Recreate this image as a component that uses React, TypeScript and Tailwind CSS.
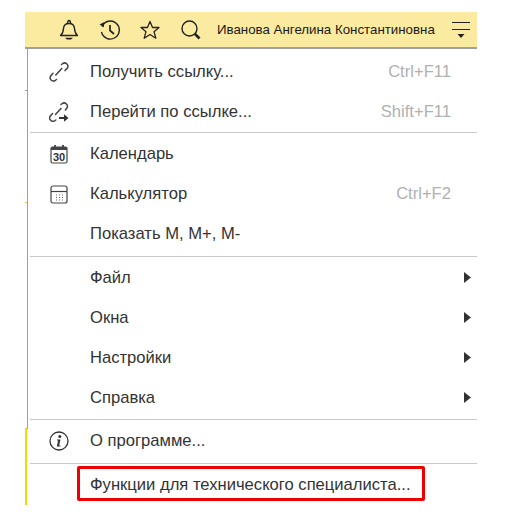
const Bell = () => (
  <svg width="20" height="22" viewBox="0 0 20 22" fill="none" stroke="#222" strokeWidth="1.4">
    <path d="M1.5 16.500c2.500-2 2.800-4 3-7 .2-3 2-5 5.500-5s5.300 2 5.500 5c.2 3 .5 5 3 7z" strokeLinejoin="round" />
    <path d="M8.500 4.200c0-1 .5-2.700 1.500-2.700s1.500 1.700 1.500 2.700" />
    <path d="M6 18.800h8l-2 1.700h-4z" fill="#222" stroke="none" />
  </svg>
);
const History = () => (
  <svg width="21" height="20" viewBox="0 0 21 20" fill="none" stroke="#222" strokeWidth="1.4">
    <path d="M3 6.500A9 9 0 1 1 2.500 12" />
    <path d="M.5 4.500l4.500-2.200v5z" fill="#222" stroke="none" />
    <path d="M11 5v5.500l4 3.500" strokeWidth="1.700" />
  </svg>
);
const Star = () => (
  <svg width="20" height="20" viewBox="0 0 20 20" fill="none" stroke="#222" strokeWidth="1.3">
    <path d="M10 1.500l2.500 6h6.500l-5 4.200 1.800 6.500-5.800-3.700-5.800 3.700 1.800-6.500-5-4.200h6.500z" strokeLinejoin="round" />
  </svg>
);
const Search = () => (
  <svg width="20" height="20" viewBox="0 0 20 20" fill="none" stroke="#222" strokeWidth="1.4">
    <circle cx="8.500" cy="8.500" r="7.500" />
    <path d="M14 14l4.500 4.500" strokeWidth="2.600" />
  </svg>
);
const Burger = () => (
  <svg width="20" height="18" viewBox="0 0 20 18" fill="none">
    <path d="M1 1.500h18M1 8.500h18" stroke="#222" strokeWidth="1.200" />
    <path d="M6.500 13h7l-3.500 4z" fill="#222" />
  </svg>
);
const Link = () => (
  <svg width="20" height="20" viewBox="0 0 20 20" fill="none" stroke="#444" strokeWidth="1.500" strokeLinecap="round">
    <path d="M7.500 17.500l-1.300 1a3.300 3.300 0 0 1-4.500-4.600l2.300-2.600" />
    <path d="M6.800 13l6-6.500" />
    <path d="M12.500 2.500l1.300-1a3.300 3.300 0 0 1 4.600 4.500l-2.300 2.600" />
  </svg>
);
const GoLink = () => (
  <svg width="20" height="20" viewBox="0 0 20 20" fill="none" stroke="#444" strokeWidth="1.500" strokeLinecap="round">
    <path d="M6.800 18l-1.100.8a3.300 3.300 0 0 1-4.500-4.600l2.300-2.600" />
    <path d="M6.500 12.500l5.500-6" />
    <path d="M12 2.500l1.300-1a3.300 3.300 0 0 1 4.600 4.500l-1.500 2" />
    <path d="M10 15h5v-2.800l4.500 3.800-4.500 3.800v-2.800h-5z" fill="#333" stroke="none" />
  </svg>
);
const Calendar = () => (
  <svg width="18" height="20" viewBox="0 0 18 20" fill="none">
    <rect x="1" y="3" width="16" height="16" rx="1.500" fill="#fff" stroke="#444" strokeWidth="1.200" />
    <path d="M1 3h16v3H1z" fill="#444" />
    <path d="M5 1v3M13 1v3" stroke="#444" strokeWidth="1.800" />
    <text x="9" y="16.800" textAnchor="middle" fontSize="11" fontWeight="700" fontFamily="'Liberation Sans', sans-serif" fill="#333">30</text>
  </svg>
);
const Calc = () => (
  <svg width="18" height="19" viewBox="0 0 18 19" fill="none">
    <rect x="1" y="1" width="16" height="17" rx="2" stroke="#444" strokeWidth="1.200" />
    <path d="M1 6.500h16" stroke="#444" strokeWidth="1.200" />
    <path d="M6 10h1M9 10h1M12 10h1M6 12.500h1M9 12.500h1M12 12.500h1M6 15h1M9 15h1M12 15h1" stroke="#666" strokeWidth="1.100" />
  </svg>
);
const Info = () => (
  <svg width="20" height="20" viewBox="0 0 20 20" fill="none">
    <circle cx="10" cy="10" r="9" stroke="#333" strokeWidth="1.300" />
    <circle cx="10.800" cy="5.500" r="1.500" fill="#333" />
    <path d="M8 8.500h3.500l-1.400 6h1.400v1H7.800l1.300-6H8z" fill="#333" />
  </svg>
);

function Item({ icon, label, hint, arrow }: { icon?: React.ReactNode; label: string; hint?: string; arrow?: boolean }) {
  return (
    <div className="flex h-10 items-center text-[16.600px] text-[#333]">
      <div className="flex w-[60px] justify-center pr-[3px]">{icon}</div>
      <span className={arrow ? "flex-1 pt-[3px]" : "flex-1 pt-[1px]"}>{label}</span>
      {hint && <span className="pt-[1px] pr-[26px] text-[#b0b0b0]">{hint}</span>}
      {arrow && (
        <svg className="mr-[6px]" width="7" height="11" viewBox="0 0 7 11">
          <path d="M0 0l7 5.500L0 11z" fill="#333" />
        </svg>
      )}
    </div>
  );
}

const Divider = () => <div className="h-px bg-[#c8c8c8]" />;

export default function App() {
  return (
    <div
      className="h-[514px] w-[514px] overflow-hidden bg-white pt-3 pl-[25px]"
      style={{ fontFamily: "'Liberation Sans', Arial, sans-serif" }}
    >
      <div className="w-[452px]">
        <div className="flex h-[37px] items-center border-b-2 border-[#a0a0a0] bg-[#fbeba0]">
          <div className="ml-[33px] flex w-[22px] justify-center"><Bell /></div>
          <div className="ml-[18px] flex w-[22px] justify-center"><History /></div>
          <div className="ml-[19px] flex w-[22px] justify-center"><Star /></div>
          <div className="ml-[19px] flex w-[22px] justify-center"><Search /></div>
          <span className="ml-[15px] text-[13.300px] whitespace-nowrap text-[#1a1a1a]">Иванова Ангелина Константиновна</span>
          <div className="ml-[16px]"><Burger /></div>
        </div>
        <div className="relative flex">
          <div className="flex h-[380px] w-[3px] shrink-0 justify-end">
            <div className="w-px bg-[#a0a0a0]" />
          </div>
          <div className="min-w-0 flex-1 pt-[3px] pl-[2px]">
            <Item icon={<Link />} label="Получить ссылку..." hint="Ctrl+F11" />
            <Item icon={<GoLink />} label="Перейти по ссылке..." hint="Shift+F11" />
            <Divider />
            <div className="pt-[1px]"><Item icon={<Calendar />} label="Календарь" /></div>
            <Item icon={<Calc />} label="Калькулятор" hint="Ctrl+F2" />
            <Item label="Показать М, М+, М-" />
            <div className="mt-[2px]"><Divider /></div>
            <Item label="Файл" arrow />
            <Item label="Окна" arrow />
            <Item label="Настройки" arrow />
            <Item label="Справка" arrow />
            <div className="mt-[2px]"><Divider /></div>
            <div className="mt-[1px]"><Item icon={<Info />} label="О программе..." /></div>
            <div className="mt-[2px]"><Divider /></div>
            <div className="mt-[2px] ml-[47px] flex h-[35px] w-[348px] items-center rounded-[2px] border-[3px] border-[#f00000] pt-[3px] pl-[10px] text-[16.600px] text-[#333]">
              Функции для технического специалиста...
            </div>
          </div>
          <div className="absolute top-[41px] left-0 h-px w-[2px] bg-[#a0a0a0]" />
          <div className="absolute top-[153px] left-0 h-px w-[2px] bg-[#e8c840]" />
          <div className="absolute top-[379px] left-0 h-[77px] w-[2px] bg-[#f5d800]" />
        </div>
      </div>
    </div>
  );
}
